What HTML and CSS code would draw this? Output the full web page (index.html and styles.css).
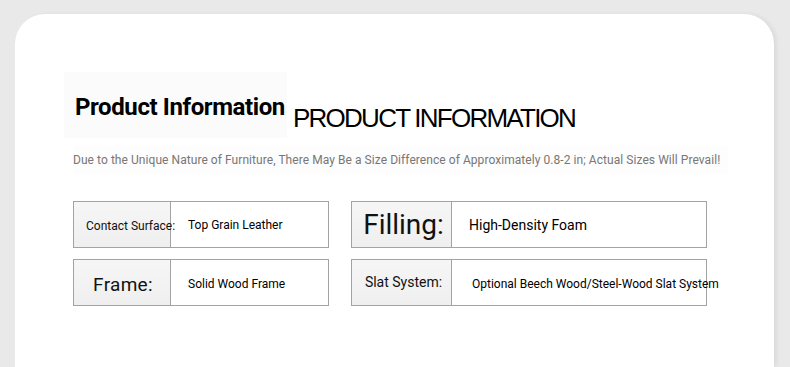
FILE: index.html
```html
<!DOCTYPE html>
<html>
<head>
<meta charset="utf-8">
<link rel="stylesheet" href="styles.css">
</head>
<body>
<div class="card">
  <div class="header">
    <div class="title-box">
      <span class="title">Product Information</span>
    </div>
    <div class="title-en">PRODUCT INFORMATION</div>
  </div>
  <p class="note">Due to the Unique Nature of Furniture, There May Be a Size Difference of Approximately 0.8-2 in; Actual Sizes Will Prevail!</p>
  <div class="specs">
    <div class="spec spec-left">
      <div class="label label-contact">Contact Surface:</div>
      <div class="value">Top Grain Leather</div>
    </div>
    <div class="spec spec-right">
      <div class="label label-filling">Filling:</div>
      <div class="value value-lg">High-Density Foam</div>
    </div>
    <div class="spec spec-left">
      <div class="label label-frame">Frame:</div>
      <div class="value value-low">Solid Wood Frame</div>
    </div>
    <div class="spec spec-right">
      <div class="label label-slat">Slat System:</div>
      <div class="value value-slat">Optional Beech Wood/Steel-Wood Slat System</div>
    </div>
  </div>
</div>
</body>
</html>
```
FILE: styles.css
```css
html, body {
  margin: 0;
  padding: 0;
}
body {
  background: #e9e9e9;
  width: 790px;
  height: 367px;
  overflow: hidden;
  font-family: Roboto, "Liberation Sans", sans-serif;
}
.card {
  margin: 14px 0 0 15px;
  width: 759px;
  height: 353px;
  background: #fff;
  border-radius: 30px 30px 0 0;
  box-shadow: 3px 0 4px rgba(0,0,0,0.06);
  padding: 58px 0 0 58px;
  box-sizing: border-box;
}
.header {
  display: flex;
  margin-left: -9px;
}
.title-box {
  width: 223px;
  height: 66px;
  background: #fbfbfb;
  padding: 21px 0 0 11px;
  box-sizing: border-box;
}
.title {
  display: block;
  font-weight: 700;
  font-size: 24px;
  line-height: 28px;
  color: #000;
  letter-spacing: -0.4px;
}
.title-en {
  margin: 31px 0 0 6px;
  font-family: "Liberation Sans", Arial, sans-serif;
  font-size: 26px;
  line-height: 30px;
  letter-spacing: -1.75px;
  color: #000;
}
.note {
  margin: 8px 0 0 0;
  font-size: 12px;
  line-height: 28px;
  letter-spacing: 0.06px;
  color: #777;
  width: 655px;
  background: #fdfdfd;
}
.specs {
  display: grid;
  grid-template-columns: 256px 356px;
  grid-auto-rows: 47px;
  column-gap: 22px;
  row-gap: 11px;
  margin-top: 27px;
}
.spec {
  display: flex;
  border: 1px solid #a3a3a3;
  box-sizing: border-box;
  background: #fff;
}
.spec-left .label { width: 97px; }
.spec-right .label { width: 100px; }
.label {
  flex: none;
  display: flex;
  align-items: center;
  justify-content: center;
  background: linear-gradient(#f6f6f6, #efefef);
  border-right: 1px solid #a3a3a3;
  color: #111;
  white-space: nowrap;
  box-sizing: border-box;
  position: relative;
  z-index: 1;
}
.label-contact {
  justify-content: flex-start;
  padding-left: 12px;
  font-size: 12px;
  padding-top: 2px;
}
.label-filling {
  font-size: 28px;
  padding-left: 4px;
}
.label-frame {
  font-size: 19px;
  padding-top: 4px;
  padding-left: 2px;
  letter-spacing: 0.3px;
}
.label-slat {
  font-size: 14px;
  padding-bottom: 2px;
  padding-left: 4px;
}
.value {
  display: flex;
  align-items: center;
  padding-left: 17px;
  font-size: 12px;
  color: #000;
  white-space: nowrap;
}
.value-lg {
  font-size: 14px;
}
.value-low {
  padding-top: 2px;
}
.value-slat {
  padding-left: 20px;
  padding-top: 2px;
}
```
